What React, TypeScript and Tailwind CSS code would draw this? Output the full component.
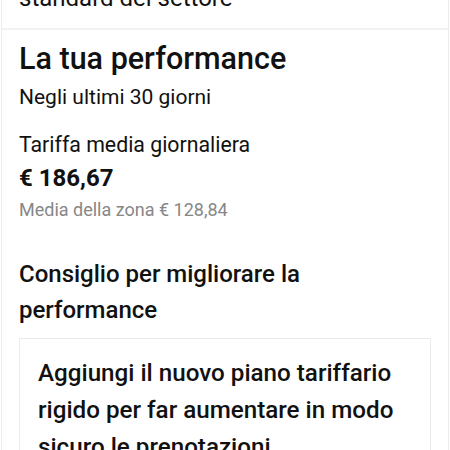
export default function App() {
  return (
    <div className="h-[450px] w-[450px] overflow-hidden bg-white" style={{ fontFamily: "Roboto, 'Noto Sans', sans-serif" }}>
      <div className="mx-[1px] min-h-full border-x border-[#ececec] bg-white text-[#111111]">
        <div className="-mt-[18px] px-[17px] pb-[14px] text-[24px] leading-8">standard del settore</div>
        <div className="h-[2px] bg-[#f2f2f2]" />
        <div className="px-[17px] pt-[9px]">
          <h2 className="text-[30.5px] font-medium leading-10">La tua performance</h2>
          <p className="mt-[4px] text-[21px] leading-7">Negli ultimi 30 giorni</p>

          <p className="mt-[20px] text-[21.3px] leading-7">Tariffa media giornaliera</p>
          <p className="mt-[3px] text-[24px] font-bold leading-8">€ 186,67</p>
          <p className="mt-[4px] text-[18px] leading-6 text-[#878787]">Media della zona € 128,84</p>

          <h3 className="mt-[34px] text-[24px] font-medium leading-9">Consiglio per migliorare la performance</h3>

          <div className="mt-[10px] border border-[#ebebeb] px-[18px] pt-[16px]">
            <p className="text-[24.2px] font-medium leading-[37px]">
              Aggiungi il nuovo piano tariffario rigido per far aumentare in modo sicuro le prenotazioni
            </p>
          </div>
        </div>
      </div>
    </div>
  );
}
